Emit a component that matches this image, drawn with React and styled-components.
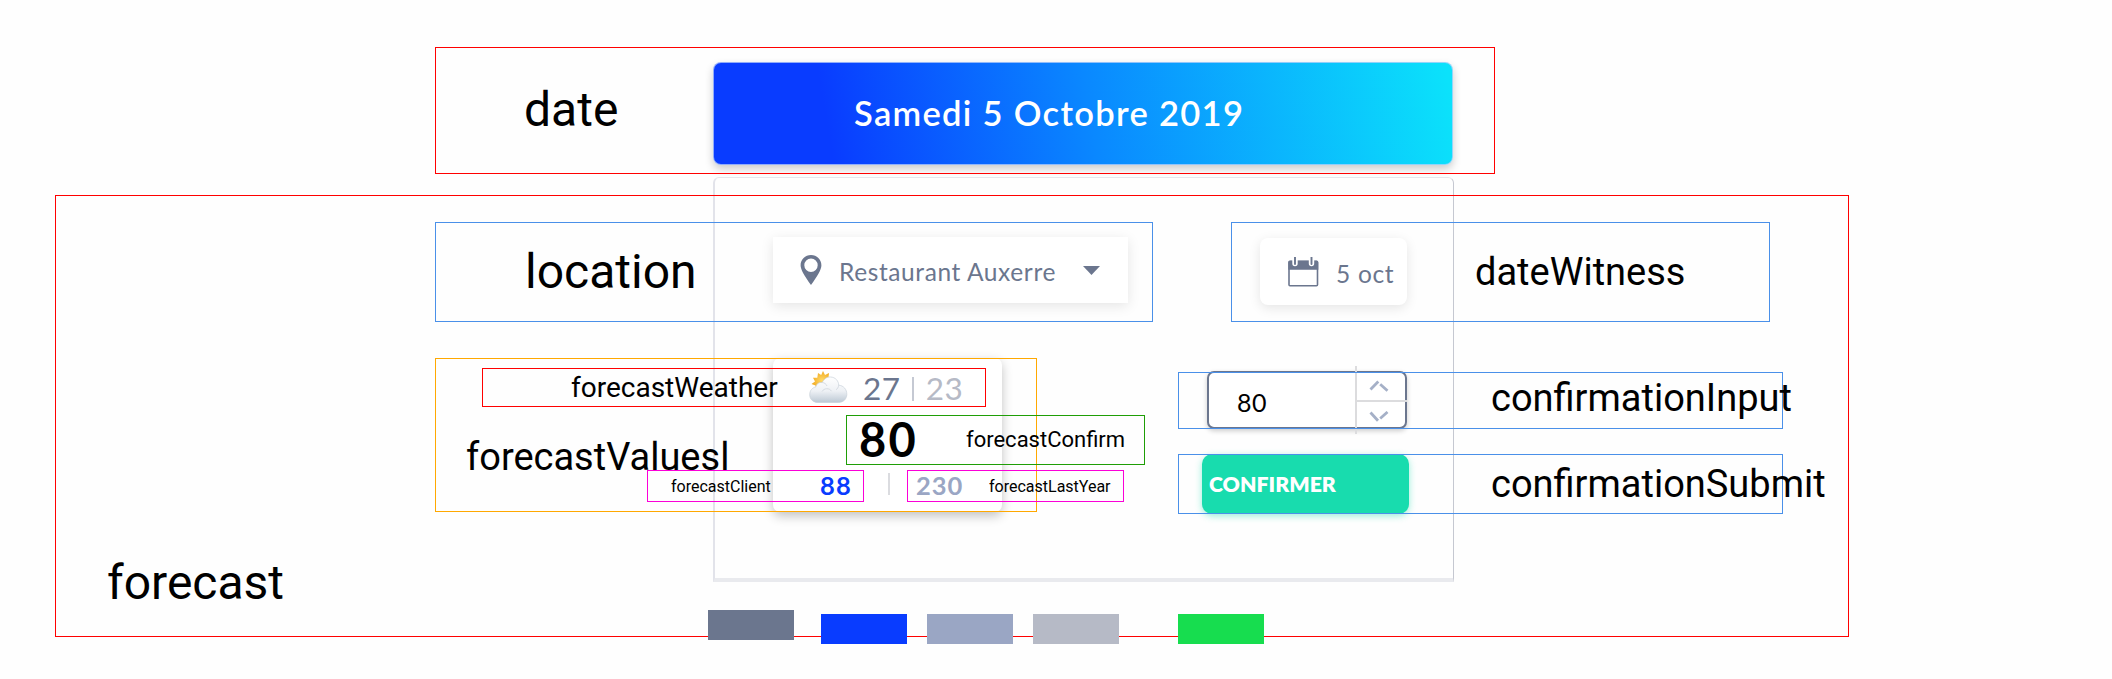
import React from "react";
import styled, { createGlobalStyle } from "styled-components";

const GlobalStyle = createGlobalStyle`
  *, *::before, *::after { box-sizing: border-box; }
  body { margin: 0; background: #fefefe; }
`;

const color = {
  slate: "#6b768e",
  blue: "#093cff",
  steel: "#9aa6c4",
  silver: "#b6bac6",
  green: "#17dd4f",
  mint: "#18dcae",
};

const Canvas = styled.main`
  position: relative;
  width: 2112px;
  height: 679px;
  overflow: hidden;
  background: #fefefe;
  font-family: Lato, "Open Sans", sans-serif;
`;

/* ---------- mockup ---------- */

const Mockup = styled.section`
  position: absolute;
  left: 713px;
  top: 62px;
  width: 741px;
  display: flex;
  flex-direction: column;
`;

const Banner = styled.header`
  display: flex;
  height: 103px;
  margin-right: 1px;
  border: 1px solid rgba(190, 210, 250, 0.75);
  border-radius: 8px;
  padding: 33px 0 0 140px;
  background: linear-gradient(80deg, ${color.blue} 16%, #0a88ff 51%, #0be2fb 99%) border-box;
  box-shadow: 0 4px 9px rgba(0, 0, 0, 0.2);
`;

const Text = styled.span`
  display: block;
  white-space: nowrap;
  line-height: 1;
  font-size: ${(p) => p.$size}px;
  font-weight: ${(p) => p.$weight || 400};
  letter-spacing: ${(p) => p.$track || 0}px;
  color: ${(p) => p.$color};
`;

const Panel = styled.div`
  position: relative;
  height: 405px;
  margin-top: 12px;
  padding: 58px 46px 0 58px;
  background: #fefefe;
  border-style: solid;
  border-width: 1px 1px 4px 2px;
  border-color: #e6e7eb #c5c8d1 #e9eaee #e2e3ea;
  border-radius: 6px 6px 0 0;
`;

const PickerRow = styled.div`
  display: flex;
  justify-content: space-between;
  align-items: flex-start;
`;

const LocationSelect = styled.div`
  display: flex;
  align-items: flex-start;
  width: 355px;
  height: 66px;
  margin-top: 1px;
  padding: 18px 0 0 27px;
  background: #fff;
  box-shadow: 0 3px 12px rgba(0, 0, 0, 0.1);

  svg { flex: none; }
  ${Text} { margin: 5px 0 0 17px; width: 225px; }
`;

const Caret = styled.svg`
  margin: 11px 0 0 19px;
`;

const DateButton = styled.div`
  display: flex;
  align-items: flex-start;
  width: 147px;
  height: 67px;
  margin-top: 2px;
  padding: 19px 0 0 28px;
  border-radius: 8px;
  background: #fff;
  box-shadow: 0 3px 12px rgba(0, 0, 0, 0.1);

  svg { flex: none; }
  ${Text} { margin: 5px 0 0 17px; }
`;

const ForecastRow = styled.div`
  display: flex;
  justify-content: space-between;
  align-items: flex-start;
  margin-top: 53px;
`;

const ForecastCard = styled.article`
  width: 229px;
  height: 154px;
  border-radius: 7px;
  background: #fff;
  box-shadow: 0 4px 11px rgba(0, 0, 0, 0.24);
`;

const Weather = styled.div`
  display: flex;
  align-items: flex-start;
  height: 57px;
  padding: 12px 0 0 36px;
`;

const Bar = styled.i`
  flex: none;
  width: 2px;
  height: ${(p) => p.$height}px;
  background: ${(p) => p.$color};
`;

const Temperatures = styled.div`
  display: flex;
  margin: 3px 0 0 15px;

  ${Bar} { margin: 4px 12px 0 11px; }
`;

const Main = styled.div`
  height: 58px;
  padding: 1px 0 0 86px;
`;

const Totals = styled.div`
  display: flex;
  padding-left: 47px;

  ${Bar} { margin: 0 26px 0 36px; }
`;

const Confirmation = styled.form`
  display: flex;
  flex-direction: column;
  width: 207px;
  margin: 13px -2px 0 0;
`;

const Stepper = styled.div`
  display: flex;
  width: 200px;
  height: 58px;
  margin: 0 0 25px 5px;
  border: 2px solid ${color.slate};
  border-radius: 7px;
  background: #fff;
  box-shadow: 0 2px 5px rgba(0, 0, 0, 0.2);

  > ${Text} { width: 146px; padding: 17px 0 0 28px; }
`;

const StepperButtons = styled.div`
  display: flex;
  flex-direction: column;
  align-items: center;
  width: 52px;
  height: 68px;
  margin: -7px -2px 0 0;
  padding: 14px 6px 0 0;
  border-left: 2px solid #dcdcde;
`;

const StepDivider = styled.i`
  align-self: stretch;
  flex: none;
  height: 2px;
  margin: 8px -6px 9px 0;
  background: #dcdcde;
`;

const Submit = styled.div`
  height: 60px;
  padding: 20px 0 0 7px;
  border-radius: 10px;
  background: ${color.mint};
  box-shadow: 0 2px 7px rgba(24, 220, 174, 0.45);
`;

/* ---------- annotations ---------- */

const Frame = styled.div`
  position: absolute;
  display: flex;
  align-items: flex-start;
  left: ${(p) => p.$x}px;
  top: ${(p) => p.$y}px;
  width: ${(p) => p.$w}px;
  height: ${(p) => p.$h}px;
  border: 1px solid ${(p) => p.$color};
`;

const Label = styled.span`
  flex: none;
  margin: ${(p) => p.$top}px 0 0 ${(p) => p.$left}px;
  font-family: Roboto, sans-serif;
  font-size: ${(p) => p.$size}px;
  line-height: 1;
  white-space: nowrap;
  color: #000;
`;

const Swatch = styled.div`
  position: absolute;
  left: ${(p) => p.$x}px;
  top: ${(p) => p.$y}px;
  width: 86px;
  height: 30px;
  background: ${(p) => p.$color};
`;

const RED = "#ff0000";
const SKY = "#4a90e9";
const PINK = "#fb00d8";

const frames = [
  { name: "date", x: 435, y: 47, w: 1060, h: 127, color: RED, left: 88, top: 38, size: 48 },
  { name: "forecast", x: 55, y: 195, w: 1794, h: 442, color: RED, left: 51, top: 363, size: 48 },
  { name: "location", x: 435, y: 222, w: 718, h: 100, color: SKY, left: 89, top: 25, size: 48 },
  { name: "dateWitness", x: 1231, y: 222, w: 539, h: 100, color: SKY, left: 243, top: 30, size: 38 },
  { name: "forecastValuesl", x: 435, y: 358, w: 602, h: 154, color: "#ffa800", left: 30, top: 79, size: 38 },
  { name: "forecastWeather", x: 482, y: 368, w: 504, h: 39, color: RED, left: 88, top: 5, size: 28 },
  { name: "forecastConfirm", x: 846, y: 415, w: 299, h: 50, color: "#1f9e06", left: 119, top: 13, size: 22 },
  { name: "forecastClient", x: 647, y: 470, w: 217, h: 32, color: PINK, left: 23, top: 8, size: 16 },
  { name: "forecastLastYear", x: 907, y: 470, w: 217, h: 32, color: PINK, left: 81, top: 8, size: 16 },
  { name: "confirmationInput", x: 1178, y: 372, w: 605, h: 57, color: SKY, left: 312, top: 6, size: 38 },
  { name: "confirmationSubmit", x: 1178, y: 454, w: 605, h: 60, color: SKY, left: 312, top: 10, size: 38 },
];

const swatches = [
  { x: 708, y: 610, color: color.slate },
  { x: 821, y: 614, color: color.blue },
  { x: 927, y: 614, color: color.steel },
  { x: 1033, y: 614, color: color.silver },
  { x: 1178, y: 614, color: color.green },
];

/* ---------- icons ---------- */

const PinIcon = () => (
  <svg width="22" height="30" viewBox="0 0 22 30">
    <path
      fill={color.slate}
      fillRule="evenodd"
      d="M11 0C5.2 0 .6 4.500 .6 10.200C.6 14.500 4.200 20.500 11 30C17.800 20.500 21.400 14.500 21.400 10.200C21.400 4.500 16.800 0 11 0ZM11 3.600A6.700 6.700 0 1 1 11 17A6.700 6.700 0 1 1 11 3.600Z"
    />
  </svg>
);

const CalendarIcon = () => (
  <svg width="31" height="30" viewBox="0 0 31 30">
    <rect x="1" y="4.500" width="28.500" height="24.300" rx="1" fill="#fff" stroke={color.slate} strokeWidth="1.600" />
    <path d="M.3 5a1.500 1.500 0 0 1 1.500-1.500h27A1.500 1.500 0 0 1 30.300 5v7.800H.3z" fill={color.slate} />
    <path d="M7 0v6.500M23.500 0v6.500" stroke="#fff" strokeWidth="5.400" strokeLinecap="round" />
    <path d="M7 0v7M23.500 0v7" stroke={color.slate} strokeWidth="1.900" strokeLinecap="round" />
  </svg>
);

const WeatherIcon = () => (
  <svg width="39" height="34" viewBox="0 0 39 34">
    <defs>
      <linearGradient id="cloud" x1="0" y1="0" x2="0" y2="1">
        <stop offset="0" stopColor="#ffffff" />
        <stop offset=".55" stopColor="#eef1f5" />
        <stop offset="1" stopColor="#bcc8d4" />
      </linearGradient>
      <radialGradient id="sun">
        <stop offset="0" stopColor="#ffd968" />
        <stop offset="1" stopColor="#f2ab22" />
      </radialGradient>
    </defs>
    <path
      fill="url(#sun)"
      d="M14 1l2 4 4-2-.5 4.500 4 .8-3 3.200 2 4-15 4-1-4-4-1.500 3.500-2.500-2-3.800 4.300.1L9 3l3.200 2z"
    />
    <path
      fill="url(#cloud)"
      stroke="#c9d1da"
      strokeWidth=".7"
      d="M9 32.500C4 32.500.7 29 .7 24.700C.7 20.500 3.300 17.600 6.800 17C7.300 13.800 10 12 13.200 12.500C15 8.700 18 6.800 21.500 7C26.500 7.200 29.600 11 29.700 15.200C34.500 15.500 38 19.500 37.800 24.500C37.600 29.500 34 32.500 29.500 32.500Z"
    />
    <path d="M13.200 12.500c2.300.2 4 1.500 4.800 3.500M13 21.500c2-3.500 7.500-3.800 9.500-.3M29.700 15.200c-.2 2-1.200 3.500-2.500 4.500" fill="none" stroke="#d5dbe2" strokeWidth="1" />
  </svg>
);

const ChevronSvg = styled.svg`
  flex: none;
`;

const Chevron = ({ down }) => (
  <ChevronSvg width="20" height="12" viewBox="0 0 20 12">
    <path
      d={down ? "M1.500 1.500L9 9.800M11.200 7.500L18.500 1" : "M1.500 9.500L9.300 1.500M11.200 4.200L18.500 10.800"}
      fill="none"
      stroke="#a5b0c7"
      strokeWidth="2.800"
    />
  </ChevronSvg>
);

export default function App() {
  return (
    <Canvas>
      <GlobalStyle />
      <Mockup>
        <Banner>
          <Text $size={34.5} $weight={600} $track={1.3} $color="#fff">Samedi 5 Octobre 2019</Text>
        </Banner>
        <Panel>
          <PickerRow>
            <LocationSelect>
              <PinIcon />
              <Text $size={24.5} $track={0.6} $color={color.slate}>Restaurant Auxerre</Text>
              <Caret width="17" height="9" viewBox="0 0 17 9">
                <path d="M0 0h17L8.500 9z" fill={color.slate} />
              </Caret>
            </LocationSelect>
            <DateButton>
              <CalendarIcon />
              <Text $size={24.5} $track={0.7} $color={color.slate}>5 oct</Text>
            </DateButton>
          </PickerRow>
          <ForecastRow>
            <ForecastCard>
              <Weather>
                <WeatherIcon />
                <Temperatures>
                  <Text $size={31.5} $track={0.6} $color={color.slate}>27</Text>
                  <Bar $height={24} $color="#c5c9d3" />
                  <Text $size={31.5} $track={0.6} $color={color.silver}>23</Text>
                </Temperatures>
              </Weather>
              <Main>
                <Text $size={47} $weight={700} $track={2.2} $color="#000">80</Text>
              </Main>
              <Totals>
                <Text $size={25.5} $weight={700} $track={1.2} $color={color.blue}>88</Text>
                <Bar $height={22} $color="#dbdce0" />
                <Text $size={25.5} $weight={700} $track={1} $color={color.steel}>230</Text>
              </Totals>
            </ForecastCard>
            <Confirmation>
              <Stepper>
                <Text $size={25} $track={0.6} $color="#000">80</Text>
                <StepperButtons>
                  <Chevron />
                  <StepDivider />
                  <Chevron down />
                </StepperButtons>
              </Stepper>
              <Submit>
                <Text $size={21.3} $weight={800} $color="#fff">CONFIRMER</Text>
              </Submit>
            </Confirmation>
          </ForecastRow>
        </Panel>
      </Mockup>

      {frames.map((f) => (
        <Frame key={f.name} $x={f.x} $y={f.y} $w={f.w} $h={f.h} $color={f.color}>
          <Label $left={f.left} $top={f.top} $size={f.size}>{f.name}</Label>
        </Frame>
      ))}
      {swatches.map((s) => (
        <Swatch key={s.x} $x={s.x} $y={s.y} $color={s.color} />
      ))}
    </Canvas>
  );
}
